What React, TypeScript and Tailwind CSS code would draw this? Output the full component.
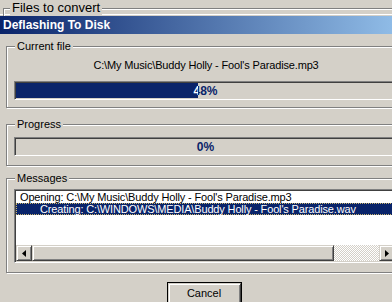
import React from "react";

const sunken =
  "border border-t-[#808080] border-l-[#808080] border-r-white border-b-white shadow-[inset_1px_1px_0_#404040,inset_-1px_-1px_0_#d4d0c8]";
const raised =
  "border border-t-[#d4d0c8] border-l-[#d4d0c8] border-r-[#404040] border-b-[#404040] shadow-[inset_1px_1px_0_#fff,inset_-1px_-1px_0_#808080]";
const etched = "border border-[#808080] shadow-[inset_1px_1px_0_#fff,1px_1px_0_#fff]";

function Group({ label, className, children }: { label: string; className: string; children?: React.ReactNode }) {
  return (
    <div className={`relative ml-[6px] w-[400px] ${etched} ${className}`}>
      <span className="absolute left-[8px] top-[-7px] bg-[#d4d0c8] px-[2px] leading-[13px] text-black">{label}</span>
      {children}
    </div>
  );
}

function Progress({ pct }: { pct: number }) {
  const label = `${pct}%`;
  const fill = Math.round((379 * pct) / 100);
  return (
    <div className={`relative ml-[7px] h-[19px] w-[383px] ${sunken}`}>
      <div className="absolute inset-[1px] flex items-center justify-center text-[12px] font-bold text-[#0a246a]">
        {label}
      </div>
      <div
        className="absolute inset-[1px] flex items-center justify-center bg-[#0a246a] text-[12px] font-bold text-white"
        style={{ clipPath: `inset(0 ${379 - fill}px 0 0)` }}
      >
        {label}
      </div>
    </div>
  );
}

export default function App() {
  return (
    <div className="relative h-[302px] w-[392px] overflow-hidden bg-[#d4d0c8] font-['Liberation_Sans',Arial,sans-serif] text-[11px] text-black">
      {/* parent window strip */}
      <div className="relative h-[14px]">
        <div className="absolute left-[3px] top-[8px] h-[8px] w-[420px] border-l border-t border-[#808080] shadow-[inset_1px_1px_0_#fff]" />
        <span className="absolute left-[10px] top-[0px] bg-[#d4d0c8] px-[2px] text-[13px] leading-[15px]">Files to convert</span>
      </div>
      <div className="h-px bg-white" />
      <div className="h-px bg-[#d4d0c8]" />
      {/* title bar */}
      <div className="flex h-[18px] w-[392px] items-center bg-[linear-gradient(to_right,#0a246a,#8fbbe6)] pl-[3px] text-[12px] font-bold text-white">
        Deflashing To Disk
      </div>
      {/* client */}
      <div className="flex w-[408px] flex-col">
        <Group label="Current file" className="mt-[12px] h-[62px] pt-[12px]">
          <div className="text-center leading-[13px] tracking-[-0.15px]">C:\My Music\Buddy Holly - Fool's Paradise.mp3</div>
          <div className="mt-[9px]">
            <Progress pct={48} />
          </div>
        </Group>
        <Group label="Progress" className="mt-[16px] h-[42px] pt-[12px]">
          <Progress pct={0} />
        </Group>
        <Group label="Messages" className="mt-[12px] h-[95px] pt-[10px]">
          <div className={`ml-[7px] flex h-[74px] w-[383px] flex-col bg-white ${sunken} p-px tracking-[-0.15px]`}>
            <div className="h-[12px] whitespace-nowrap pl-[4px] leading-[12px]">
              Opening: C:\My Music\Buddy Holly - Fool's Paradise.mp3
            </div>
            <div className="h-[12px] whitespace-nowrap border border-dotted border-[#c9b46e] bg-[#0a246a] pl-[23px] leading-[10px] text-white">
              Creating: C:\WINDOWS\MEDIA\Buddy Holly - Fool's Paradise.wav
            </div>
            <div className="flex-1" />
            <div className="flex h-[16px]">
              <div className={`flex h-[16px] w-[16px] items-center justify-center bg-[#d4d0c8] ${raised}`}>
                <svg width="4" height="7" viewBox="0 0 4 7"><path d="M4 0V7L0 3.5Z" fill="#000" /></svg>
              </div>
              <div className={`h-[16px] w-[302px] bg-[#d4d0c8] ${raised}`} />
              <div className="h-[16px] flex-1 bg-[repeating-conic-gradient(#fff_0_25%,#d4d0c8_0_50%)] bg-[length:2px_2px]" />
              <div className={`flex h-[16px] w-[16px] items-center justify-center bg-[#d4d0c8] ${raised}`}>
                <svg width="4" height="7" viewBox="0 0 4 7"><path d="M0 0V7L4 3.5Z" fill="#000" /></svg>
              </div>
            </div>
          </div>
        </Group>
        <div className="mt-[9px] flex justify-center">
          <div className="h-[23px] w-[75px] border border-black">
            <div className={`flex h-full w-full items-center justify-center bg-[#d4d0c8] ${raised}`}>Cancel</div>
          </div>
        </div>
      </div>
    </div>
  );
}
